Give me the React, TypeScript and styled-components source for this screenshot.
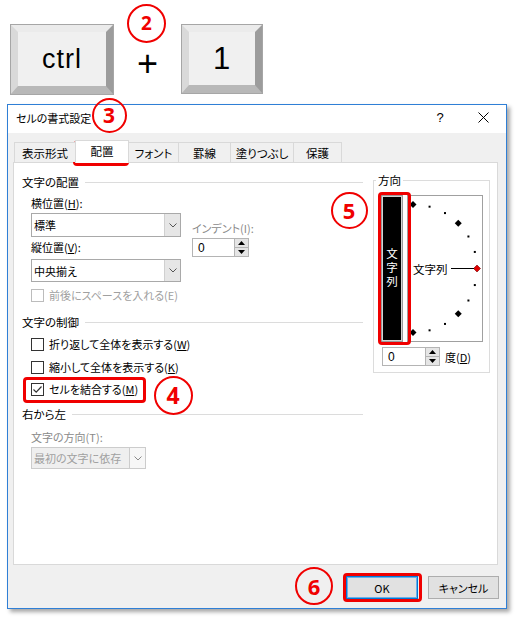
import styled, { createGlobalStyle } from "styled-components";

const GlobalStyle = createGlobalStyle`
    html, body {
        margin: 0;
        padding: 0;
        background: #fff;
    }
    body {
        color: #000;
        font-family: "Noto Sans CJK JP", "Noto Sans", sans-serif;
        font-feature-settings: "palt";
        font-size: 11px;
    }
`

const RED = "#f00000"

const Page = styled.div`
    height: 619px;
    overflow: hidden;
    position: relative;
    width: 517px;
`

const KeysRow = styled.div`
    align-items: flex-start;
    box-sizing: border-box;
    display: flex;
    height: 104px;
    padding: 24px 0 0 10px;
`

const Key = styled.div<{ $w: number; $h: number; $size: number }>`
    align-items: center;
    background: #f0f0f0;
    border-color: #ebebeb #9c9c9c #b8b8b8 #d9d9d9;
    border-style: solid;
    border-width: 8px 8px 9px 8px;
    box-sizing: border-box;
    display: flex;
    font-family: "Liberation Sans", Arial, sans-serif;
    font-size: ${p => p.$size}px;
    height: ${p => p.$h}px;
    justify-content: center;
    letter-spacing: 1px;
    outline: 1px solid #a6a6a6;
    outline-offset: -1px;
    width: ${p => p.$w}px;
`

const PlusSlot = styled.div`
    align-items: center;
    box-sizing: border-box;
    display: flex;
    font-family: "Liberation Sans", Arial, sans-serif;
    font-size: 36px;
    height: 70px;
    justify-content: center;
    line-height: 1;
    padding-top: 10px;
    width: 67px;
`

const Dialog = styled.div`
    background: #f0f0f0;
    border: 1px solid #2f7fd6;
    box-shadow: 3px 3px 4px rgba(0, 0, 0, 0.35);
    box-sizing: border-box;
    display: flex;
    flex-direction: column;
    height: 505px;
    margin-left: 7px;
    width: 500px;
`

const TitleBar = styled.div`
    align-items: center;
    background: #fff;
    box-sizing: border-box;
    display: flex;
    height: 28px;
    padding: 0 0 3px 8px;
`

const TitleText = styled.div`
    flex: 1;
    font-size: 11px;
`

const TitleButton = styled.div<{ $w: number }>`
    align-items: center;
    display: flex;
    font-family: "Liberation Sans", Arial, sans-serif;
    font-size: 13px;
    justify-content: center;
    width: ${p => p.$w}px;
`

const Body = styled.div`
    display: flex;
    flex: 1;
    flex-direction: column;
    padding: 7px 0 0 5px;
`

const TabStrip = styled.div`
    align-items: flex-end;
    display: flex;
    height: 23px;
    margin: 0 0 -1px 1px;
    position: relative;
    z-index: 1;
`

const Tab = styled.div<{ $w: number; $active?: boolean }>`
    align-items: center;
    background: ${p => (p.$active ? "#fff" : "#f0f0f0")};
    border: 1px solid #d9d9d9;
    border-bottom: none;
    box-sizing: border-box;
    display: flex;
    font-size: 11.5px;
    height: ${p => (p.$active ? 23 : 20)}px;
    justify-content: center;
    margin-bottom: ${p => (p.$active ? 0 : 1)}px;
    padding-bottom: ${p => (p.$active ? 2 : 0)}px;
    position: relative;
    width: ${p => p.$w}px;
    z-index: ${p => (p.$active ? 2 : 1)};

    & + & {
        margin-left: -1px;
    }
`

const Panel = styled.div`
    background: #fff;
    border: 1px solid #d9d9d9;
    box-sizing: border-box;
    display: flex;
    height: 403px;
    padding: 11px 0 0 8px;
    width: 485px;
`

const LeftCol = styled.div`
    display: flex;
    flex-direction: column;
    width: 341px;
`

const GroupHeader = styled.div<{ $mt?: number }>`
    align-items: center;
    display: flex;
    font-size: 11.5px;
    gap: 6px;
    height: 16px;
    line-height: 16px;
    margin-top: ${p => p.$mt ?? 0}px;

    &::after {
        border-top: 1px solid #dcdcdc;
        content: "";
        flex: 1;
    }
`

const Indent = styled.div<{ $mt?: number }>`
    display: flex;
    flex-direction: column;
    margin: ${p => p.$mt ?? 0}px 0 0 9px;
`

const AlignRow = styled.div`
    align-items: flex-start;
    display: flex;
`

const Col = styled.div`
    display: flex;
    flex-direction: column;
`

const IndentCol = styled.div`
    display: flex;
    flex-direction: column;
    margin-left: 11px;
    padding-top: 25px;
`

const FieldLabel = styled.div<{ $mt?: number; $muted?: boolean }>`
    color: ${p => (p.$muted ? "#8a8a8a" : "#000")};
    height: 16px;
    line-height: 16px;
    margin-top: ${p => p.$mt ?? 0}px;
    white-space: nowrap;
`

const SelectBox = styled.div<{ $w: number; $h: number; $mt?: number; $disabled?: boolean }>`
    background: ${p => (p.$disabled ? "#efefef" : "#fff")};
    border: 1px solid ${p => (p.$disabled ? "#cccccc" : "#a9a9a9")};
    box-sizing: border-box;
    color: ${p => (p.$disabled ? "#a0a0a0" : "#000")};
    display: flex;
    height: ${p => p.$h}px;
    margin-top: ${p => p.$mt ?? 0}px;
    width: ${p => p.$w}px;
`

const SelectText = styled.div`
    align-items: center;
    display: flex;
    flex: 1;
    padding-left: 2px;
    white-space: nowrap;
`

const DropButton = styled.div<{ $disabled?: boolean }>`
    align-items: center;
    background: ${p => (p.$disabled ? "#f7f7f7" : "#e6e6e6")};
    border-left: 1px solid ${p => (p.$disabled ? "#cccccc" : "#d0d0d0")};
    display: flex;
    justify-content: center;
    width: 15px;
`

const SpinBox = styled.div<{ $w: number; $mt?: number }>`
    background: #fff;
    border: 1px solid #b4b4b4;
    box-sizing: border-box;
    display: flex;
    height: 19px;
    margin-top: ${p => p.$mt ?? 0}px;
    width: ${p => p.$w}px;
`

const SpinText = styled.div`
    align-items: center;
    display: flex;
    flex: 1;
    font-family: "Liberation Sans", Arial, sans-serif;
    font-size: 12px;
    padding-left: 5px;
`

const SpinButtons = styled.div`
    display: flex;
    flex-direction: column;
    width: 14px;
`

const SpinButton = styled.div`
    align-items: center;
    background: #e5e5e5;
    border-left: 1px solid #b4b4b4;
    display: flex;
    flex: 1;
    justify-content: center;

    & + & {
        border-top: 1px solid #b4b4b4;
    }
`

const CheckRow = styled.div<{ $mt?: number; $disabled?: boolean }>`
    align-items: center;
    color: ${p => (p.$disabled ? "#a0a0a0" : "#000")};
    display: flex;
    gap: 5px;
    height: 16px;
    margin-top: ${p => p.$mt ?? 0}px;
    white-space: nowrap;
`

const Box = styled.div<{ $disabled?: boolean }>`
    align-items: center;
    background: #fff;
    border: 1px solid ${p => (p.$disabled ? "#bcbcbc" : "#333")};
    box-sizing: border-box;
    display: flex;
    height: 13px;
    justify-content: center;
    width: 13px;
`

const DirectionBox = styled.fieldset`
    border: 1px solid #dcdcdc;
    box-sizing: border-box;
    height: 201px;
    margin: -2px 0 0 10px;
    min-width: 0;
    padding: 7px 6px 5px 7px;
    width: 117px;
`

const Legend = styled.legend`
    font-size: 11.5px;
    line-height: 16px;
    margin-left: -5px;
    padding: 0 2px;
`

const DirRow = styled.div`
    display: flex;
    gap: 4px;
`

const TextBar = styled.div`
    align-items: center;
    background: #000;
    border: 1px solid #9a9a9a;
    box-shadow: inset 0 0 0 1px #d4d4d4;
    box-sizing: border-box;
    color: #fff;
    display: flex;
    height: 147px;
    justify-content: center;
    width: 22px;
`

const VerticalText = styled.span`
    font-feature-settings: normal;
    font-size: 11.5px;
    letter-spacing: 2.5px;
    writing-mode: vertical-rl;
`

const Dial = styled.div`
    align-items: center;
    border: 1px solid #a0a0a0;
    box-sizing: border-box;
    display: flex;
    height: 147px;
    padding-left: 5px;
    position: relative;
    width: 76px;
`

const DialDrawing = styled.svg`
    inset: 0;
    position: absolute;
`

const DialLabel = styled.span`
    font-feature-settings: normal;
    font-size: 11.5px;
    position: relative;
`

const DegreeRow = styled.div`
    align-items: center;
    display: flex;
    gap: 5px;
    margin-top: 5px;
    padding-left: 1px;
`

const Footer = styled.div`
    display: flex;
    gap: 10px;
    justify-content: flex-end;
    margin-top: 11px;
    padding-right: 7px;
`

const Button = styled.div<{ $w: number; $default?: boolean }>`
    align-items: center;
    background: #e1e1e1;
    border: 1px solid ${p => (p.$default ? "#0078d7" : "#adadad")};
    box-shadow: ${p => (p.$default ? "inset 0 0 0 1px #6aaee8" : "none")};
    box-sizing: border-box;
    display: flex;
    height: 23px;
    justify-content: center;
    width: ${p => p.$w}px;
`

const Circle = styled.div<{ $x: number; $y: number; $d: number; $size: number }>`
    align-items: center;
    border: 2.5px solid ${RED};
    border-radius: 50%;
    box-sizing: border-box;
    color: ${RED};
    display: flex;
    font-family: "Noto Sans", "Liberation Sans", sans-serif;
    font-size: ${p => p.$size}px;
    font-weight: 700;
    height: ${p => p.$d}px;
    justify-content: center;
    left: ${p => p.$x - p.$d / 2}px;
    line-height: 1;
    position: absolute;
    top: ${p => p.$y - p.$d / 2}px;
    width: ${p => p.$d}px;
`

const Highlight = styled.div<{ $x: number; $y: number; $w: number; $h: number }>`
    border: 3px solid ${RED};
    border-radius: 4px;
    box-sizing: border-box;
    height: ${p => p.$h}px;
    left: ${p => p.$x}px;
    position: absolute;
    top: ${p => p.$y}px;
    width: ${p => p.$w}px;
`

const Chevron = ({ color = "#555" }: { color?: string }) => (
    <svg width="8" height="5" viewBox="0 0 8 5">
        <polyline points="0.5,0.5 4,4 7.5,0.5" fill="none" stroke={color} strokeWidth="1" />
    </svg>
)

const Select = ({ w, h, mt, disabled, children }: { w: number; h: number; mt?: number; disabled?: boolean; children: React.ReactNode }) => (
    <SelectBox $w={w} $h={h} $mt={mt} $disabled={disabled}>
        <SelectText>{children}</SelectText>
        <DropButton $disabled={disabled}>
            <Chevron color={disabled ? "#8a8a8a" : "#555"} />
        </DropButton>
    </SelectBox>
)

const Spinner = ({ w, mt, value }: { w: number; mt?: number; value: string }) => (
    <SpinBox $w={w} $mt={mt}>
        <SpinText>{value}</SpinText>
        <SpinButtons>
            <SpinButton>
                <svg width="7" height="4" viewBox="0 0 7 4"><polygon points="3.5,0 7,4 0,4" fill="#000" /></svg>
            </SpinButton>
            <SpinButton>
                <svg width="7" height="4" viewBox="0 0 7 4"><polygon points="0,0 7,0 3.5,4" fill="#000" /></svg>
            </SpinButton>
        </SpinButtons>
    </SpinBox>
)

const Check = ({ checked, disabled, mt, children }: { checked?: boolean; disabled?: boolean; mt?: number; children: React.ReactNode }) => (
    <CheckRow $mt={mt} $disabled={disabled}>
        <Box $disabled={disabled}>
            {checked && (
                <svg width="11" height="11" viewBox="0 0 11 11">
                    <polyline points="1.5,5.5 4.2,8.2 9.5,2.5" fill="none" stroke="#333" strokeWidth="1.2" />
                </svg>
            )}
        </Box>
        <span>{children}</span>
    </CheckRow>
)

// semicircle of tick marks around the dial centre
const DialMarks = () => {
    const cx = 5
    const cy = 72.5
    const r = 64
    const marks = []
    for (let a = -90; a <= 90; a += 15) {
        const rad = (a * Math.PI) / 180
        const x = cx + r * Math.cos(rad)
        const y = cy - r * Math.sin(rad)
        if (a === 0) {
            marks.push(
                <polygon key={a} points={`${x},${y - 3.5} ${x + 3.5},${y} ${x},${y + 3.5} ${x - 3.5},${y}`} fill="#e00000" stroke="#700" strokeWidth="0.6" />
            )
        } else if (a % 45 === 0) {
            marks.push(
                <polygon key={a} points={`${x},${y - 3.5} ${x + 3.5},${y} ${x},${y + 3.5} ${x - 3.5},${y}`} fill="#000" />
            )
        } else {
            marks.push(<rect key={a} x={x - 1} y={y - 1} width="2" height="2" fill="#000" />)
        }
    }
    return (
        <DialDrawing width="74" height="145" viewBox="0 0 74 145">
            {marks}
            <line x1="43" y1={cy} x2="66" y2={cy} stroke="#000" strokeWidth="1" />
        </DialDrawing>
    )
}

const tabs = [
    { label: "表示形式", w: 62 },
    { label: "配置", w: 54, active: true },
    { label: "フォント", w: 51 },
    { label: "罫線", w: 53 },
    { label: "塗りつぶし", w: 64 },
    { label: "保護", w: 49 },
]

const App = () => {
    return (
        <Page>
            <GlobalStyle />
            <KeysRow>
                <Key $w={104} $h={71} $size={27}>ctrl</Key>
                <PlusSlot>+</PlusSlot>
                <Key $w={82} $h={70} $size={31}>1</Key>
            </KeysRow>

            <Dialog>
                <TitleBar>
                    <TitleText>セルの書式設定</TitleText>
                    <TitleButton $w={40}>?</TitleButton>
                    <TitleButton $w={46}>
                        <svg width="11" height="11" viewBox="0 0 11 11">
                            <path d="M0.5 0.5 L10.5 10.5 M10.5 0.5 L0.5 10.5" stroke="#000" strokeWidth="1" />
                        </svg>
                    </TitleButton>
                </TitleBar>

                <Body>
                    <TabStrip>
                        {tabs.map(t => (
                            <Tab key={t.label} $w={t.w} $active={t.active}>{t.label}</Tab>
                        ))}
                    </TabStrip>

                    <Panel>
                        <LeftCol>
                            <GroupHeader>文字の配置</GroupHeader>
                            <Indent $mt={5}>
                                <AlignRow>
                                    <Col>
                                        <FieldLabel>横位置(<u>H</u>):</FieldLabel>
                                        <Select w={150} h={24} mt={2}>標準</Select>
                                        <FieldLabel $mt={2}>縦位置(<u>V</u>):</FieldLabel>
                                        <Select w={150} h={23} mt={4}>中央揃え</Select>
                                    </Col>
                                    <IndentCol>
                                        <FieldLabel $muted>インデント(I):</FieldLabel>
                                        <Spinner w={57} mt={2} value="0" />
                                    </IndentCol>
                                </AlignRow>
                                <Check mt={5} disabled>前後にスペースを入れる(E)</Check>
                            </Indent>

                            <GroupHeader $mt={11}>文字の制御</GroupHeader>
                            <Indent>
                                <Check mt={6}>折り返して全体を表示する(<u>W</u>)</Check>
                                <Check mt={7}>縮小して全体を表示する(<u>K</u>)</Check>
                                <Check mt={6} checked>セルを結合する(<u>M</u>)</Check>
                            </Indent>

                            <GroupHeader $mt={9}>右から左</GroupHeader>
                            <Indent>
                                <FieldLabel $mt={7} $muted>文字の方向(T):</FieldLabel>
                                <Select w={115} h={22} mt={2} disabled>最初の文字に依存</Select>
                            </Indent>
                        </LeftCol>

                        <DirectionBox>
                            <Legend>方向</Legend>
                            <DirRow>
                                <TextBar>
                                    <VerticalText>文字列</VerticalText>
                                </TextBar>
                                <Dial>
                                    <DialMarks />
                                    <DialLabel>文字列</DialLabel>
                                </Dial>
                            </DirRow>
                            <DegreeRow>
                                <Spinner w={58} value="0" />
                                <span>度(<u>D</u>)</span>
                            </DegreeRow>
                        </DirectionBox>
                    </Panel>

                    <Footer>
                        <Button $w={72} $default>OK</Button>
                        <Button $w={71}>キャンセル</Button>
                    </Footer>
                </Body>
            </Dialog>

            <Circle $x={146.5} $y={23} $d={39} $size={19}>2</Circle>
            <Circle $x={109} $y={115} $d={35} $size={21}>3</Circle>
            <Circle $x={349} $y={210} $d={37} $size={22}>5</Circle>
            <Circle $x={173} $y={395.5} $d={39} $size={23}>4</Circle>
            <Circle $x={314} $y={586} $d={38} $size={22}>6</Circle>

            <Highlight $x={73} $y={141} $w={56} $h={25} />
            <Highlight $x={378} $y={192} $w={33} $h={153} />
            <Highlight $x={23} $y={377} $w={123} $h={26} />
            <Highlight $x={343} $y={573} $w={79} $h={29} />
        </Page>
    )
}

export default App;
